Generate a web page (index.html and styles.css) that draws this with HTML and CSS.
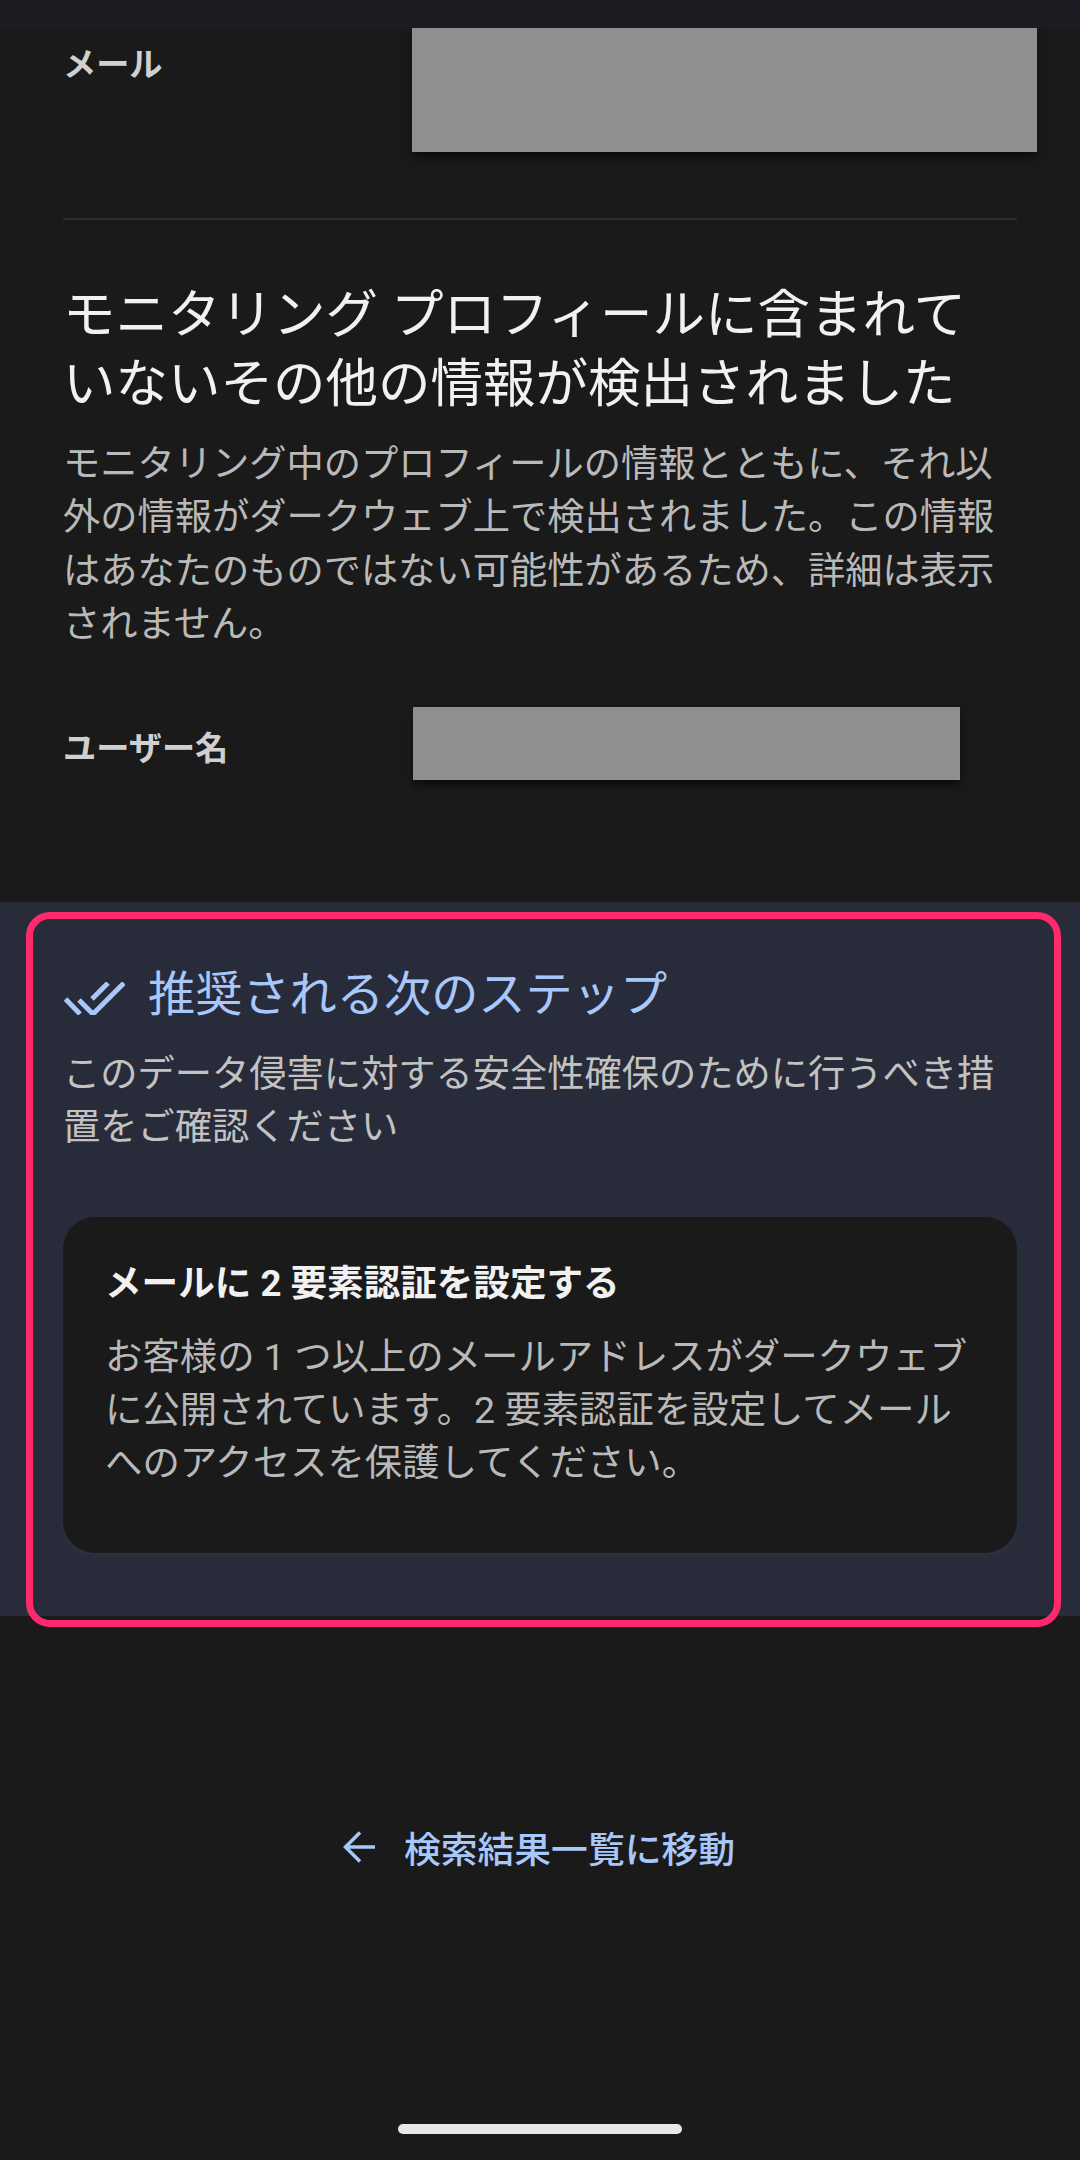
FILE: index.html
```html
<!DOCTYPE html>
<html lang="ja">
<head>
    <meta charset="UTF-8">
    <meta name="viewport" content="width=device-width, initial-scale=1.0">
    <title>ダークウェブ レポート</title>
    <link rel="stylesheet" href="styles.css">
</head>
<body>
    <div class="page">
        <div class="top-strip"></div>

        <div class="result">
            <div class="info-row">
                <div class="info-label">メール</div>
                <div class="redacted redacted-mail"></div>
            </div>

            <hr class="divider">

            <h2 class="other-title">モニタリング プロフィールに含まれていないその他の情報が検出されました</h2>
            <p class="body-text">モニタリング中のプロフィールの情報とともに、それ以外の情報がダークウェブ上で検出されました。この情報はあなたのものではない可能性があるため、詳細は表示されません。</p>

            <div class="info-row user-row">
                <div class="info-label">ユーザー名</div>
                <div class="redacted redacted-user"></div>
            </div>
        </div>

        <section class="next-steps">
            <div class="steps-header">
                <svg class="steps-icon" width="61" height="33" viewBox="0 0 61 33" fill="none" stroke="#a8c7fa" stroke-width="5">
                    <path d="M1.5 17 L16 32"/>
                    <path d="M15 18 L29 32 L60 1"/>
                    <path d="M28 17 L44 1"/>
                </svg>
                <h2 class="steps-title">推奨される次のステップ</h2>
            </div>
            <p class="body-text steps-desc">このデータ侵害に対する安全性確保のために行うべき措置をご確認ください</p>

            <div class="step-card">
                <h3 class="step-title">メールに 2 要素認証を設定する</h3>
                <p class="body-text step-text">お客様の 1 つ以上のメールアドレスがダークウェブに公開されています。2 要素認証を設定してメールへのアクセスを保護してください。</p>
            </div>
        </section>

        <a href="#" class="back-link">
            <svg width="32" height="32" viewBox="0 0 32 32" fill="none" stroke="#a8c7fa" stroke-width="3.5">
                <path d="M2 16 H32"/>
                <path d="M17 1.5 L2.5 16 L17 30.5"/>
            </svg>
            <span>検索結果一覧に移動</span>
        </a>

        <div class="home-bar"></div>

        <div class="highlight"></div>
    </div>
</body>
</html>
```

FILE: styles.css
```css
* {
    margin: 0;
    padding: 0;
    box-sizing: border-box;
}

body {
    font-family: Roboto, "Noto Sans CJK JP", sans-serif;
    background: #1a1a1a;
}

.page {
    position: relative;
    width: 1080px;
    height: 2160px;
    display: flex;
    flex-direction: column;
    overflow: hidden;
}

.top-strip {
    height: 28px;
    background: #1b1d23;
}

.result {
    height: 874px;
    padding: 0 63px;
}

.info-row {
    display: flex;
    align-items: flex-start;
}

.info-label {
    flex: none;
    width: 349px;
    padding-top: 10px;
    font-size: 33.2px;
    line-height: 53px;
    font-weight: 700;
    color: #d0d0d0;
}

.redacted {
    background: #8f8f8f;
    box-shadow: 0 6px 8px rgba(0, 0, 0, 0.5);
}

.redacted-mail {
    flex: none;
    width: 625px;
    height: 124px;
}

.redacted-user {
    flex: none;
    width: 547px;
    height: 73px;
}

.divider {
    margin-top: 66px;
    border: none;
    height: 2px;
    background: #2b2d33;
}

.other-title {
    margin-top: 61px;
    max-width: 935px;
    font-size: 52.5px;
    line-height: 69px;
    font-weight: 400;
    color: #f1f1f1;
}

.body-text {
    font-size: 37.25px;
    line-height: 53.3px;
    color: #b9b9b9;
}

.other-title + .body-text {
    margin-top: 19px;
}

.user-row {
    margin-top: 56px;
}

.user-row .info-label {
    width: 350px;
    padding-top: 15px;
}

.next-steps {
    height: 714px;
    padding: 63px 63px 0;
    background: #282c3a;
}

.steps-header {
    display: flex;
    align-items: center;
    gap: 23px;
    height: 60px;
}

.steps-icon {
    flex: none;
    margin-left: 1px;
    margin-top: 6px;
}

.steps-title {
    font-size: 47.2px;
    line-height: 60px;
    font-weight: 400;
    color: #a8c7fa;
}

.steps-desc {
    margin-top: 23px;
    color: #c2c2c2;
}

.step-card {
    margin-top: 62px;
    height: 336px;
    padding: 42px 42px 0;
    background: #1a1a1a;
    border-radius: 32px;
    box-shadow: 0 3px 6px rgba(255, 255, 255, 0.03);
}

.step-title {
    font-size: 36.6px;
    line-height: 50px;
    font-weight: 700;
    color: #f1f1f1;
}

.step-text {
    margin-top: 22px;
    font-size: 37.4px;
}

.back-link {
    margin-top: 201px;
    display: flex;
    align-items: center;
    justify-content: center;
    gap: 29px;
    height: 60px;
    padding-right: 2px;
    font-size: 36.8px;
    font-weight: 500;
    color: #a8c7fa;
    text-decoration: none;
}

.home-bar {
    margin: auto auto 26px;
    width: 284px;
    height: 10px;
    border-radius: 5px;
    background: #e8e8e8;
}

/* pink annotation drawn over the screenshot */
.highlight {
    position: absolute;
    left: 26px;
    top: 912px;
    width: 1035px;
    height: 715px;
    border: 7px solid #ff2a6d;
    border-radius: 24px;
}
```
